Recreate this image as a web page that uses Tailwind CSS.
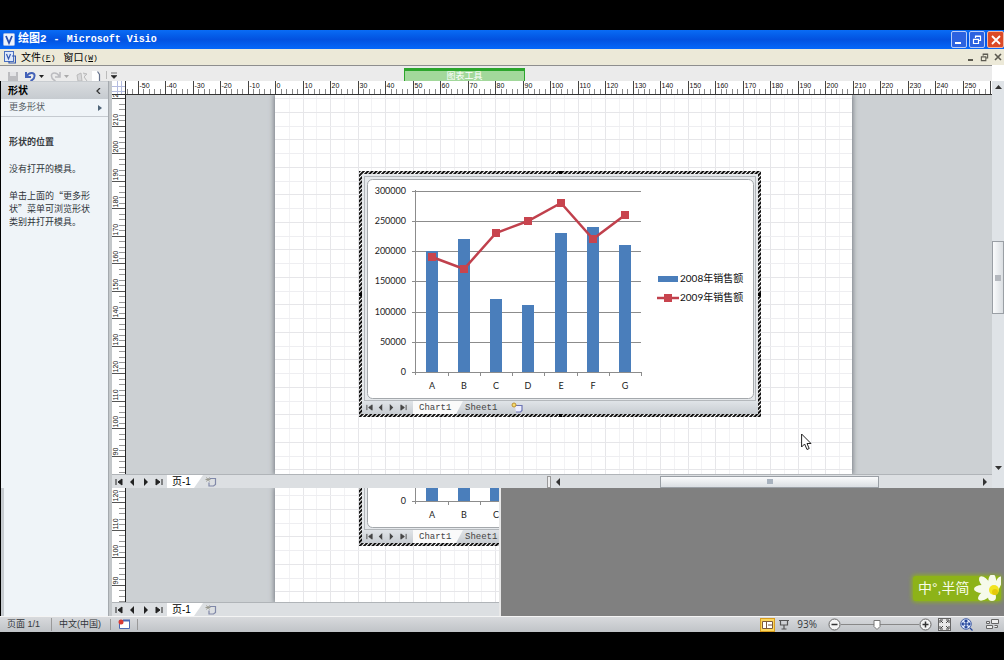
<!DOCTYPE html>
<html lang="zh-CN">
<head>
<meta charset="utf-8">
<title>绘图2 - Microsoft Visio</title>
<script src="https://cdn.jsdelivr.net/npm/@tailwindcss/browser@4"></script>
</head>
<body class="flex h-screen flex-col overflow-hidden bg-black py-[30px] pb-[28px] font-['Liberation_Sans','Noto_Sans_CJK_SC',sans-serif] text-[9px] leading-[13px] text-[#30343a]">

<svg class="hidden">
  <symbol id="first" viewBox="0 0 8 8"><path d="M1 1v6M7 1v6L3 4z" fill="currentColor" stroke="currentColor" stroke-width="1"/></symbol>
  <symbol id="prev" viewBox="0 0 8 8"><path d="M6 0v8L2 4z" fill="currentColor"/></symbol>
  <symbol id="next" viewBox="0 0 8 8"><path d="M2 0v8l4-4z" fill="currentColor"/></symbol>
  <symbol id="last" viewBox="0 0 8 8"><path d="M7 1v6M1 1v6l4-3z" fill="currentColor" stroke="currentColor" stroke-width="1"/></symbol>
  <symbol id="restore" viewBox="0 0 10 10"><path d="M3.5 3V1.5h5v4H7M3 1.2h6M1.5 4.5h5v4h-5zM1 4.3h6" fill="none" stroke="currentColor" stroke-width="1.2"/></symbol>
  <symbol id="newpage" viewBox="0 0 12 12"><path d="M4.500 2.500h6v6l-2 1.500H4V6.500" fill="none" stroke="#8088a8" stroke-width="1.200"/><path d="M1.500 1.500l3 4M4.500 1.500l-3 4M.500 3.500h5" stroke="#9a9a90" stroke-width="1"/></symbol>
</svg>

<header class="flex h-[19px] shrink-0 items-center bg-gradient-to-b from-[#0a6cf5] via-[#0352e0] to-[#0668fa] pl-[3px] text-white">
  <svg class="mr-[3px] h-[13px] w-[12px]" viewBox="0 0 12 13"><rect x=".5" y=".5" width="11" height="12" rx="1" fill="#eef3fc" stroke="#9db6e8"/><path d="M3 3l3 7 3-7" fill="none" stroke="#2b50b0" stroke-width="1.800"/></svg>
  <h1 class="flex flex-1 items-center gap-[7px] font-['Liberation_Mono','Noto_Sans_CJK_SC',monospace] text-[10px] font-bold"><span class="text-[11px]">绘图2</span><span>-</span><span>Microsoft Visio</span></h1>
  <div class="flex gap-[2px]">
    <button aria-label="最小化" class="flex h-[17px] w-[16px] items-end rounded-[2px] border border-[#b8ccf8] bg-[#2c62e0] p-[3px]"><span class="h-[2px] w-[6px] bg-white"></span></button>
    <button aria-label="还原" class="flex h-[17px] w-[16px] items-center justify-center rounded-[2px] border border-[#b8ccf8] bg-[#2c62e0]"><svg class="size-[10px]"><use href="#restore"/></svg></button>
    <button aria-label="关闭" class="flex h-[17px] w-[17px] items-center justify-center rounded-[2px] border border-[#f0b8a8] bg-[#dc4a26]"><svg class="size-[10px]" viewBox="0 0 10 10"><path d="M1 1l8 8M9 1L1 9" stroke="#fff" stroke-width="1.800"/></svg></button>
  </div>
</header>

<nav class="flex h-[16px] shrink-0 items-center bg-[#ece9d8] pl-[4px] text-[10px] text-black">
  <svg class="mr-[5px] h-[13px] w-[12px]" viewBox="0 0 12 13"><rect x=".5" y=".5" width="9" height="10" fill="#dfe9fb" stroke="#4a70c0"/><path d="M2.500 3l2 5 2-5M8 5h3.500v7H5v-2" fill="none" stroke="#3458b0" stroke-width="1.200"/></svg>
  <button class="mr-[8px] flex items-center">文件<span class="font-['Liberation_Mono',monospace] text-[8px]">(<u>F</u>)</span></button>
  <button class="flex items-center">窗口<span class="font-['Liberation_Mono',monospace] text-[8px]">(<u>W</u>)</span></button>
  <div class="ml-auto flex items-center gap-[5px] pr-[2px] text-[#5c5a50]">
    <button aria-label="最小化窗口" class="flex h-[8px] w-[9px] items-end justify-center"><span class="h-[2px] w-[5px] bg-current"></span></button>
    <button aria-label="还原窗口"><svg class="size-[9px]"><use href="#restore"/></svg></button>
    <button aria-label="关闭窗口"><svg class="size-[8px]" viewBox="0 0 8 8"><path d="M1 1l6 6M7 1L1 7" stroke="currentColor" stroke-width="1.600"/></svg></button>
  </div>
</nav>

<div class="flex h-[16px] shrink-0 bg-white">
  <div class="flex flex-1 items-start overflow-hidden border-t border-[#8e8e8e] bg-[#ebebeb]">
    <div class="flex w-[404px] shrink-0 items-start pt-[5px] pl-[7px]">
      <button aria-label="保存"><svg class="mr-[6px] h-[11px] w-[12px]" viewBox="0 0 12 11"><path d="M1 1h10v10H1z" fill="#bdbdc0"/><path d="M3 1h6v4H3z" fill="#e4e4e6"/></svg></button>
      <button aria-label="撤消"><svg class="h-[11px] w-[11px]" viewBox="0 0 11 11"><path d="M1 1v5h5M1.500 5.500C4 1 10 1 9.500 5c0 2-2 4-4 5" fill="none" stroke="#4462b8" stroke-width="2"/></svg></button>
      <svg class="mt-[4px] ml-[3px] h-[3px] w-[5px]" viewBox="0 0 5 3"><path d="M0 0h5L2.500 3z" fill="#222"/></svg>
      <button aria-label="重复" class="ml-[6px]"><svg class="h-[11px] w-[11px]" viewBox="0 0 11 11"><path d="M10 1v5H5M9.500 5.500C7 1 1 1 1.500 5c0 2 2 4 4 5" fill="none" stroke="#bcbcc0" stroke-width="1.600"/></svg></button>
      <svg class="mt-[4px] ml-[3px] h-[3px] w-[5px]" viewBox="0 0 5 3"><path d="M0 0h5L2.500 3z" fill="#aaa"/></svg>
      <button aria-label="格式" class="ml-[7px]"><svg class="h-[11px] w-[12px]" viewBox="0 0 12 11"><path d="M1 4l4-2 1 8H2zM7 2l4 1-3 3 3 4" fill="#d8d8da" stroke="#bbb"/></svg></button>
      <button aria-label="新建" class="ml-[4px]"><svg class="h-[11px] w-[9px]" viewBox="0 0 9 11"><path d="M0 0h6l2 3v8H0z" fill="#fff"/><path d="M5.500 .5l2 3V11" fill="none" stroke="#66728c" stroke-width="1.200"/></svg></button>
      <button aria-label="自定义快速访问工具栏" class="ml-[5px] border-l border-[#bbb] pl-[4px]"><svg class="h-[8px] w-[6px]" viewBox="0 0 6 8"><path d="M0 2h6M0 4.500h6L3 7.500z" fill="#222" stroke="#222" stroke-width=".6"/></svg></button>
    </div>
    <button class="mt-[2px] h-[13px] w-[121px] border-x border-t-[3px] border-[#2ca52c] bg-[#a2d89b] text-[9px] leading-[10px] text-white">图表工具</button>
  </div>
  <div class="w-[12px] shrink-0"></div>
</div>

<main class="flex min-h-0 flex-1 border-l border-black bg-[#c3c7ca]">
  <aside class="flex w-[108px] shrink-0 flex-col border-r border-[#a4a9ae] bg-[#eff4f8]">
    <div class="flex h-[18px] shrink-0 items-center justify-between border-t border-[#c8ccd0] bg-gradient-to-b from-[#d9dcdf] to-[#c6cbd0] pr-[7px] pl-[7px]">
      <h2 class="text-[10px] font-bold text-black">形状</h2>
      <button aria-label="折叠"><svg class="h-[6px] w-[5px]" viewBox="0 0 5 6"><path d="M4 0L1 3l3 3" fill="none" stroke="#333" stroke-width="1.300"/></svg></button>
    </div>
    <button class="flex h-[18px] w-full shrink-0 items-center justify-between border-b border-[#c5cad0] pr-[6px] pl-[8px] text-[#555c64]">更多形状<svg class="h-[6px] w-[4px]" viewBox="0 0 4 6"><path d="M0 0v6l4-3z" fill="#4e6478"/></svg></button>
    <div class="min-h-0 flex-1 pt-[18px] pl-[8px] font-['Noto_Sans_CJK_SC',sans-serif] leading-[13px]">
      <h3 class="mb-[14px] font-bold text-[#383c42]">形状的位置</h3>
      <p class="mb-[14px]">没有打开的模具。</p>
      <p>单击上面的“更多形<br>状”菜单可浏览形状<br>类别并打开模具。</p>
    </div>
    <div class="h-[128px] shrink-0 border-l-[3px] border-[#c6cbd0]"></div>
  </aside>

  <div class="flex min-w-0 flex-1 flex-col pl-[3px]">
    <section class="flex min-h-0 flex-1">
      <div class="flex min-w-0 flex-1 flex-col">
        <div class="flex h-[14px] shrink-0 bg-white">
          <svg class="h-[14px] w-[14px] shrink-0" viewBox="0 0 14 14"><path d="M0 5.500h14M0 10.500h14M5.500 0v14M9.500 0v14" stroke="#b4bce0"/><path d="M0 13.500h14M13.500 0v14" stroke="#333"/></svg>
          <svg id="rulerX" class="h-[14px] min-w-0 flex-1"></svg>
        </div>
        <div class="flex min-h-0 flex-1">
          <svg id="rulerY1" class="h-full w-[14px] shrink-0 bg-white"></svg>
          <div class="relative min-w-0 flex-1 overflow-hidden bg-[#ccd0d3] pl-[149px]">
            <svg id="page1" class="h-full w-[577px] bg-white shadow-[0_0_5px_1px_#777c84]"></svg>
            <div data-object class="absolute top-[76px] left-[233px]"></div>
            <svg class="absolute top-[338px] left-[675px] h-[18px] w-[11px]" viewBox="0 0 11 18"><path d="M.6 1v13l3-3 2.400 5.500 2.200-1L6 10.500h4z" fill="#fff" stroke="#222"/></svg>
          </div>
        </div>
        <div class="flex h-[14px] shrink-0 items-center border-t border-[#b0b4b8] bg-[#dcdfe2]">
          <div data-pagetabs class="flex h-full w-[435px] items-center"></div>
          <div class="h-[12px] w-[4px] border border-[#999] bg-[#eee]"></div>
          <button aria-label="向左滚动" class="ml-[3px]"><svg class="size-[8px] text-[#333]"><use href="#prev"/></svg></button>
          <div class="flex flex-1 pl-[98px]"><div class="flex h-[12px] w-[219px] items-center justify-center border border-[#9a9fa5] bg-gradient-to-b from-[#fafbfc] to-[#dadee2]"><span class="h-[5px] w-[6px] bg-[#a8b2be]"></span></div></div>
          <button aria-label="向右滚动" class="mr-[3px]"><svg class="size-[8px] text-[#333]"><use href="#next"/></svg></button>
        </div>
      </div>
      <div class="flex w-[12px] shrink-0 flex-col items-center bg-[#dfe3e7]">
        <button aria-label="向上滚动" class="mt-[4px] flex"><svg class="h-[4px] w-[7px]" viewBox="0 0 7 4"><path d="M0 4h7L3.500 0z" fill="#333"/></svg></button>
        <div class="flex min-h-0 w-full flex-1 items-center"><div class="flex h-[73px] w-full items-center justify-center border border-[#9a9fa5] bg-gradient-to-r from-[#fafbfc] to-[#dadee2]"><span class="h-[6px] w-[6px] bg-[#b4b8be]"></span></div></div>
        <button aria-label="向下滚动" class="mb-[18px] flex"><svg class="h-[4px] w-[7px]" viewBox="0 0 7 4"><path d="M0 0h7L3.500 4z" fill="#333"/></svg></button>
      </div>
    </section>

    <section class="flex h-[128px] shrink-0">
      <div class="flex w-[387px] shrink-0 flex-col">
        <div class="flex min-h-0 flex-1">
          <svg id="rulerY2" class="h-full w-[14px] shrink-0 bg-white"></svg>
          <div class="relative min-w-0 flex-1 overflow-hidden bg-[#ccd0d3] pl-[149px]">
            <svg id="page2" class="h-full w-[577px] bg-white shadow-[0_0_5px_1px_#777c84]"></svg>
            <div data-object class="absolute bottom-[56px] left-[233px]"></div>
          </div>
        </div>
        <div data-pagetabs class="flex h-[14px] items-center border-t border-[#b0b4b8] bg-[#dcdfe2]"></div>
      </div>
      <div class="relative flex-1 border-l-2 border-[#e8e8e8] bg-[#808080]">
        <div class="absolute right-[3px] bottom-[15px] flex h-[25px] w-[88px] items-center rounded-[3px] bg-[#8db318] pl-[5px] text-[14px] text-[#f8fce8] shadow-[0_0_4px_1px_#8db318]">
          <span>中°,半简</span>
          <svg class="absolute right-0 bottom-0 h-[26px] w-[28px]" viewBox="0 0 28 26"><g fill="#f6faea"><ellipse cx="12" cy="8" rx="8" ry="4" transform="rotate(50 12 8)"/><ellipse cx="19" cy="7" rx="8" ry="4" transform="rotate(95 19 7)"/><ellipse cx="25" cy="9" rx="8" ry="3" transform="rotate(110 25 9)"/><ellipse cx="9" cy="14" rx="8" ry="4"/><ellipse cx="12" cy="20" rx="8" ry="4" transform="rotate(-35 12 20)"/><ellipse cx="19" cy="22" rx="4" ry="4"/></g><circle cx="21" cy="15" r="5" fill="#f2e420"/><circle cx="22" cy="17" r="3" fill="#e4c80c"/></svg>
        </div>
      </div>
    </section>
  </div>
</main>

<footer class="flex h-[16px] shrink-0 items-center border-t border-[#f4f4f4] bg-gradient-to-b from-[#d8dadd] to-[#c0c3c7] pr-[5px] text-[#33373c]">
  <span class="w-[51px] pl-[7px]">页面 1/1</span>
  <button class="w-[59px] border-l border-[#999] pl-[7px] text-left">中文(中国)</button>
  <button aria-label="录制宏" class="flex w-[28px] items-center justify-center border-x border-[#999]"><svg class="h-[11px] w-[13px]" viewBox="0 0 13 11"><path d="M1.500 1.500h10v8h-10z" fill="#fff" stroke="#4a68b4"/><path d="M5 1.500h7" stroke="#4a68b4" stroke-width="2"/><circle cx="3" cy="3" r="2.500" fill="#d83a34"/></svg></button>
  <div class="ml-auto flex items-center">
    <button aria-label="普通视图" class="flex h-[14px] w-[15px] items-center justify-center border border-[#d89c20] bg-[#fbd75c]"><svg class="h-[10px] w-[11px]" viewBox="0 0 11 10"><path d="M.5 1.500h10v7H.5zM4.500 1.500v7M6 5h4" fill="#fff" stroke="#7c5a3c"/></svg></button>
    <button aria-label="全屏显示" class="ml-[4px]"><svg class="h-[11px] w-[10px]" viewBox="0 0 10 11"><path d="M0 1.500h10M1.500 2v4h7V2M5 6v4M2.500 10h5" fill="none" stroke="#555" stroke-width="1.200"/></svg></button>
    <button class="ml-[8px] font-['Open_Sans',sans-serif] text-[10px]">93%</button>
    <button aria-label="缩小" class="ml-[11px]"><svg class="size-[13px]" viewBox="0 0 13 13"><circle cx="6.500" cy="6.500" r="5.500" fill="#f4f4f4" stroke="#666"/><path d="M3.500 6.500h6" stroke="#333" stroke-width="1.500"/></svg></button>
    <div class="relative flex w-[78px] items-center"><input type="range" aria-label="显示比例" value="45" class="h-px w-full appearance-none bg-[#888] [&::-webkit-slider-thumb]:size-0 [&::-webkit-slider-thumb]:appearance-none"><svg class="pointer-events-none absolute left-[32px] h-[10px] w-[8px]" viewBox="0 0 8 10"><path d="M1 .5h6v6L4 9.500 1 6.500z" fill="#fff" stroke="#777"/></svg></div>
    <button aria-label="放大"><svg class="size-[13px]" viewBox="0 0 13 13"><circle cx="6.500" cy="6.500" r="5.500" fill="#f4f4f4" stroke="#666"/><path d="M3.500 6.500h6M6.500 3.500v6" stroke="#333" stroke-width="1.500"/></svg></button>
    <button aria-label="适应窗口大小" class="ml-[6px]"><svg class="size-[13px]" viewBox="0 0 13 13"><rect x=".5" y=".5" width="12" height="12" fill="#e8e8e8" stroke="#666"/><path d="M2 5V2h3M8 2h3v3M11 8v3H8M5 11H2V8M3 3l7 7M10 3l-7 7" fill="none" stroke="#444"/><path d="M5 5h3v3H5z" fill="#e8e8e8"/></svg></button>
    <button aria-label="扫视和缩放" class="ml-[9px]"><svg class="size-[13px]" viewBox="0 0 13 13"><circle cx="6" cy="6" r="5.300" fill="#dfe8fa" stroke="#4460a8"/><path d="M6 2v8M2 6h8M4.500 3.500L6 2l1.500 1.500M4.500 8.500L6 10l1.500-1.500M3.500 4.500L2 6l1.500 1.500M8.500 4.500L10 6 8.500 7.500M10 10l2.500 2.500" fill="none" stroke="#24459c" stroke-width="1.200"/></svg></button>
    <button aria-label="切换窗口" class="ml-[13px]"><svg class="h-[11px] w-[13px]" viewBox="0 0 13 11"><path d="M5.500 .5h7v4h-7zM.5 2.500h3v2h-3zM.5 6.500h6v3h-6zM8.500 6.500h3v2h-3" fill="#eee" stroke="#666"/></svg></button>
  </div>
</footer>

<template id="pageTabs">
  <button aria-label="第一页" class="ml-[3px]"><svg class="size-[8px] text-[#222]"><use href="#first"/></svg></button>
  <button aria-label="上一页" class="ml-[5px]"><svg class="size-[8px] text-[#222]"><use href="#prev"/></svg></button>
  <button aria-label="下一页" class="ml-[6px]"><svg class="size-[8px] text-[#222]"><use href="#next"/></svg></button>
  <button aria-label="最后一页" class="ml-[5px]"><svg class="size-[8px] text-[#222]"><use href="#last"/></svg></button>
  <button class="ml-[4px] h-full w-[36px] bg-white pl-[5px] text-left text-[10px] leading-[13px] text-black [clip-path:polygon(0_0,100%_0,75%_100%,0_100%)]">页-1</button>
  <button aria-label="插入页" class="ml-[2px]"><svg class="size-[12px]"><use href="#newpage"/></svg></button>
</template>

<template id="chartObject">
  <div class="relative w-[402px] bg-[repeating-linear-gradient(135deg,#111_0px,#111_1px,#fff_2px,#111_3px)] p-[3px]">
    <span class="absolute top-0 left-[200px] size-[3px] bg-black"></span>
    <span class="absolute bottom-0 left-[200px] size-[3px] bg-black"></span>
    <span class="absolute top-[122px] left-0 size-[3px] bg-black"></span>
    <span class="absolute top-[122px] right-0 size-[3px] bg-black"></span>
    <div class="bg-[#e6e9ec]">
      <svg data-chart class="block h-[227px] w-full font-['Lato','Noto_Sans_CJK_SC',sans-serif] text-[9px]" viewBox="362 174 396 227">
        <rect x="364.500" y="176.500" width="391" height="224" fill="none" stroke="#b4b8bc"/>
        <rect x="367.500" y="179.500" width="386" height="219" rx="5" fill="#fff" stroke="#a4a8ac"/>
      </svg>
      <div class="flex h-[13px] items-center bg-gradient-to-b from-[#e0e4e8] to-[#c8cdd2] pl-[4px] font-['Liberation_Mono',monospace] text-[9px] text-[#444]">
        <button aria-label="第一张" class="mr-[4px]"><svg class="size-[7px]"><use href="#first"/></svg></button>
        <button aria-label="上一张" class="mr-[4px]"><svg class="size-[7px]"><use href="#prev"/></svg></button>
        <button aria-label="下一张" class="mr-[5px]"><svg class="size-[7px]"><use href="#next"/></svg></button>
        <button aria-label="最后一张" class="mr-[6px]"><svg class="size-[7px]"><use href="#last"/></svg></button>
        <button class="h-full w-[50px] bg-[#fafafa] pt-[2px] pl-[6px] text-left leading-[11px] [clip-path:polygon(0_0,100%_0,86%_100%,0_100%)]">Chart1</button>
        <button class="h-full w-[48px] pt-[2px] pl-[2px] text-left leading-[11px]">Sheet1</button>
        <button aria-label="插入工作表"><svg class="size-[12px]" viewBox="0 0 12 12"><path d="M4 3.500h7v5l-1.500 1.500H5" fill="#eef" stroke="#6c74b4" stroke-width="1.200"/><circle cx="3" cy="3" r="2" fill="#f4dc70" stroke="#c09030"/></svg></button>
      </div>
    </div>
  </div>
</template>

<script>
const NS = 'http://www.w3.org/2000/svg';
function add(svg, name, attrs, text) {
  const el = document.createElementNS(NS, name);
  for (const k in attrs) el.setAttribute(k, attrs[k]);
  if (text !== undefined) el.textContent = text;
  svg.appendChild(el);
}
const line = (svg, x1, y1, x2, y2, stroke, w = 1) => add(svg, 'line', {x1, y1, x2, y2, stroke, 'stroke-width': w});
const STEP = 27.5;

document.querySelectorAll('[data-pagetabs]').forEach(e => e.append(document.getElementById('pageTabs').content.cloneNode(true)));
document.querySelectorAll('[data-object]').forEach(e => e.append(document.getElementById('chartObject').content.cloneNode(true)));

// Rulers: a tick every two millimetres, a label every ten
const rx = document.getElementById('rulerX');
for (let t = -27; t <= 130; t++) {
  const x = Math.round(149 + t * STEP / 5) + .5, major = t % 5 === 0;
  line(rx, x, major ? 0 : 8, x, 14, major ? '#444' : '#888');
  if (major && t < 130) add(rx, 'text', {x: x + 1, y: 7, 'font-size': 7, fill: '#111'}, String(t * 2));
}
line(rx, 0, 13.5, 3000, 13.5, '#333');

function rulerY(id, y200, from, to) {
  const s = document.getElementById(id);
  for (let t = from; t <= to; t++) {
    const y = Math.round(y200 + t * STEP / 5) + .5, major = t % 5 === 0;
    line(s, major ? 0 : 7, y, 14, y, major ? '#555' : '#999');
    if (major) add(s, 'text', {x: 0, y: 0, transform: `translate(6 ${y - 1}) rotate(-90)`, 'font-size': 7, fill: '#111'}, String(200 - t * 2));
  }
  line(s, 13.5, 0, 13.5, 3000, '#222');
}
rulerY('rulerY1', 58, -10, 60);
rulerY('rulerY2', -206, 38, 60);

function grid(id, y0) {
  const s = document.getElementById(id);
  for (let i = 1; i < 42; i++) {
    const x = Math.round(i * STEP / 2) + .5;
    line(s, x, 0, x, 3000, i % 2 ? '#f2f2f4' : '#e6e6e9');
  }
  for (let i = 0; i < 80; i++) {
    const y = Math.round(y0 + i * STEP / 2) + .5;
    line(s, 0, y, 577, y, i % 2 ? '#e6e6e9' : '#eeeef1');
  }
}
grid('page1', 3);
grid('page2', 7);

// Combined column and line chart; the lower pane shows only its bottom left corner
const sales2008 = [200, 220, 120, 110, 230, 240, 210], sales2009 = [190, 170, 230, 250, 280, 220, 260];
const cx = i => Math.round(431.5 + i * 32.3), cy = v => Math.round(372 - v * .605);
document.querySelectorAll('[data-chart]').forEach((s, pane) => {
  const label = (attrs, text) => {
    if (pane === 0 || (attrs.y > 370 && attrs.x < 500)) add(s, 'text', attrs, text);
  };
  for (let v = 0; v <= 300; v += 50) {
    line(s, 412, cy(v) + .5, 641, cy(v) + .5, '#8c8c8c');
    label({x: 406, y: cy(v) + 3, 'text-anchor': 'end', fill: '#222'}, String(v * 1000));
  }
  line(s, 415.5, 190, 415.5, 375, '#8c8c8c');
  sales2008.forEach((v, i) => {
    add(s, 'rect', {x: cx(i) - 6, y: cy(v), width: 12, height: 372 - cy(v), fill: '#4a7ebb'});
    line(s, cx(i) + 16.5, 372, cx(i) + 16.5, 376, '#8c8c8c');
    label({x: cx(i), y: 389, 'text-anchor': 'middle', fill: '#222'}, 'ABCDEFG'[i]);
  });
  add(s, 'polyline', {points: sales2009.map((v, i) => cx(i) + ',' + cy(v)).join(' '), fill: 'none', stroke: '#c0404c', 'stroke-width': 2.5});
  sales2009.forEach((v, i) => add(s, 'rect', {x: cx(i) - 4, y: cy(v) - 4, width: 8, height: 8, fill: '#c8444e'}));
  add(s, 'rect', {x: 658, y: 276, width: 20, height: 6, fill: '#4a7ebb'});
  label({x: 680, y: 282, 'font-size': 10, fill: '#111'}, '2008年销售额');
  line(s, 657, 298, 679, 298, '#c0404c', 2.5);
  add(s, 'rect', {x: 664, y: 294, width: 8, height: 8, fill: '#c8444e'});
  label({x: 680, y: 301, 'font-size': 10, fill: '#111'}, '2009年销售额');
});
</script>
</body>
</html>
